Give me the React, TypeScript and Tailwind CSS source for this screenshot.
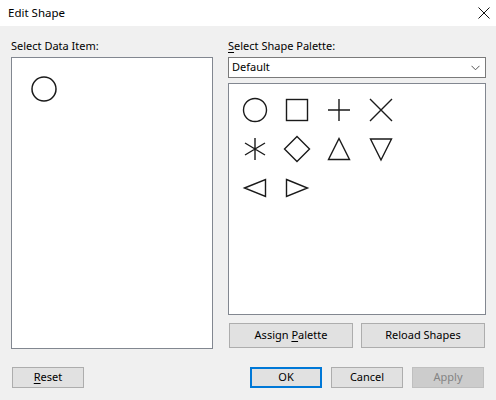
import type { ReactNode } from 'react';

const ink = '#1a1a1a';

function Shape({ children }: { children: ReactNode }) {
  return (
    <div className="flex items-center justify-center">
      <svg width="28" height="28" viewBox="0 0 28 28" fill="none" stroke={ink} strokeWidth="1.4">
        {children}
      </svg>
    </div>
  );
}

function Btn({ children, className = '' }: { children: ReactNode; className?: string }) {
  return (
    <button className={`flex items-center justify-center border border-[#adadad] bg-[#e1e1e1] text-[11px] text-black ${className}`}>
      {children}
    </button>
  );
}

export default function App() {
  return (
    <div className="w-[496px] h-[400px] flex flex-col bg-[#f0f0f0] font-['Noto_Sans',sans-serif] text-[11px] text-black">
      {/* title bar */}
      <div className="h-[26px] bg-white flex items-center justify-between pl-2 pr-[6px] shrink-0">
        <span className="text-[11.5px] leading-4">Edit Shape</span>
        <svg width="12" height="12" viewBox="0 0 12 12" stroke="#111" strokeWidth="1">
          <path d="M0.5 0.5L11.5 11.5M11.5 0.5L0.5 11.5" />
        </svg>
      </div>

      <div className="flex pl-[11px] pr-[10px] pt-3 gap-[15px]">
        {/* left column */}
        <div className="w-[202px] flex flex-col">
          <div className="h-4 leading-4 mb-[3px]">Select Data Item:</div>
          <div className="h-[292px] bg-white border border-[#828790] pl-[18px] pt-[17px]">
            <svg width="28" height="28" viewBox="0 0 28 28" fill="none" stroke={ink} strokeWidth="1.5">
              <circle cx="14" cy="14" r="12" />
            </svg>
          </div>
        </div>

        {/* right column */}
        <div className="flex-1 flex flex-col">
          <div className="h-4 leading-4 mb-[3px]">
            <span className="underline underline-offset-2">S</span>elect Shape Palette:
          </div>
          <div className="h-[21px] bg-white border border-[#7a7a7a] flex items-center justify-between pl-[3px] pr-[5px]">
            <span>Default</span>
            <svg width="9" height="6" viewBox="0 0 9 6" fill="none" stroke="#555" strokeWidth="1">
              <path d="M0.5 0.8L4.5 4.8L8.5 0.8" />
            </svg>
          </div>
          <div className="h-[232px] mt-[5px] bg-white border border-[#828790] pl-[5px] pt-[6px]">
            <div className="grid grid-cols-[repeat(4,42px)] auto-rows-[39px]">
              <Shape>
                <circle cx="14" cy="14" r="11.5" />
              </Shape>
              <Shape>
                <rect x="3.5" y="3.5" width="21" height="21" />
              </Shape>
              <Shape>
                <path d="M14 3V25M3 14H25" />
              </Shape>
              <Shape>
                <path d="M3 3L25 25M25 3L3 25" />
              </Shape>
              <Shape>
                <path d="M14 3V25M4 8L24 20M24 8L4 20" />
              </Shape>
              <Shape>
                <path d="M14 1.5L26.5 14L14 26.5L1.5 14Z" />
              </Shape>
              <Shape>
                <path d="M14 3.5L24.5 24.5H3.5Z" />
              </Shape>
              <Shape>
                <path d="M3.5 4H24.5L14 25Z" />
              </Shape>
              <Shape>
                <path d="M3.5 14L24.5 5.5V22.5Z" />
              </Shape>
              <Shape>
                <path d="M3.5 5.5L24.5 14L3.5 22.5Z" />
              </Shape>
            </div>
          </div>
          <div className="flex gap-[8px] mt-[8px] pl-px pr-px">
            <Btn className="h-[25px] flex-1">
              Assign&nbsp;<span className="underline underline-offset-2">P</span>alette
            </Btn>
            <Btn className="h-[25px] flex-1">Reload Shapes</Btn>
          </div>
        </div>
      </div>

      {/* bottom buttons */}
      <div className="flex items-center mt-[18px] pl-3 pr-[12px]">
        <Btn className="w-[72px] h-[21px]">
          <span className="underline underline-offset-2">R</span>eset
        </Btn>
        <div className="flex-1" />
        <div className="flex gap-[9px]">
          <button className="w-[72px] h-[21px] flex items-center justify-center border-2 border-[#0078d7] bg-[#e1e1e1] text-[11px]">
            OK
          </button>
          <Btn className="w-[72px] h-[21px]">Cancel</Btn>
          <button className="w-[72px] h-[21px] flex items-center justify-center border border-[#bfbfbf] bg-[#cccccc] text-[11px] text-[#838383]">
            Apply
          </button>
        </div>
      </div>
    </div>
  );
}
